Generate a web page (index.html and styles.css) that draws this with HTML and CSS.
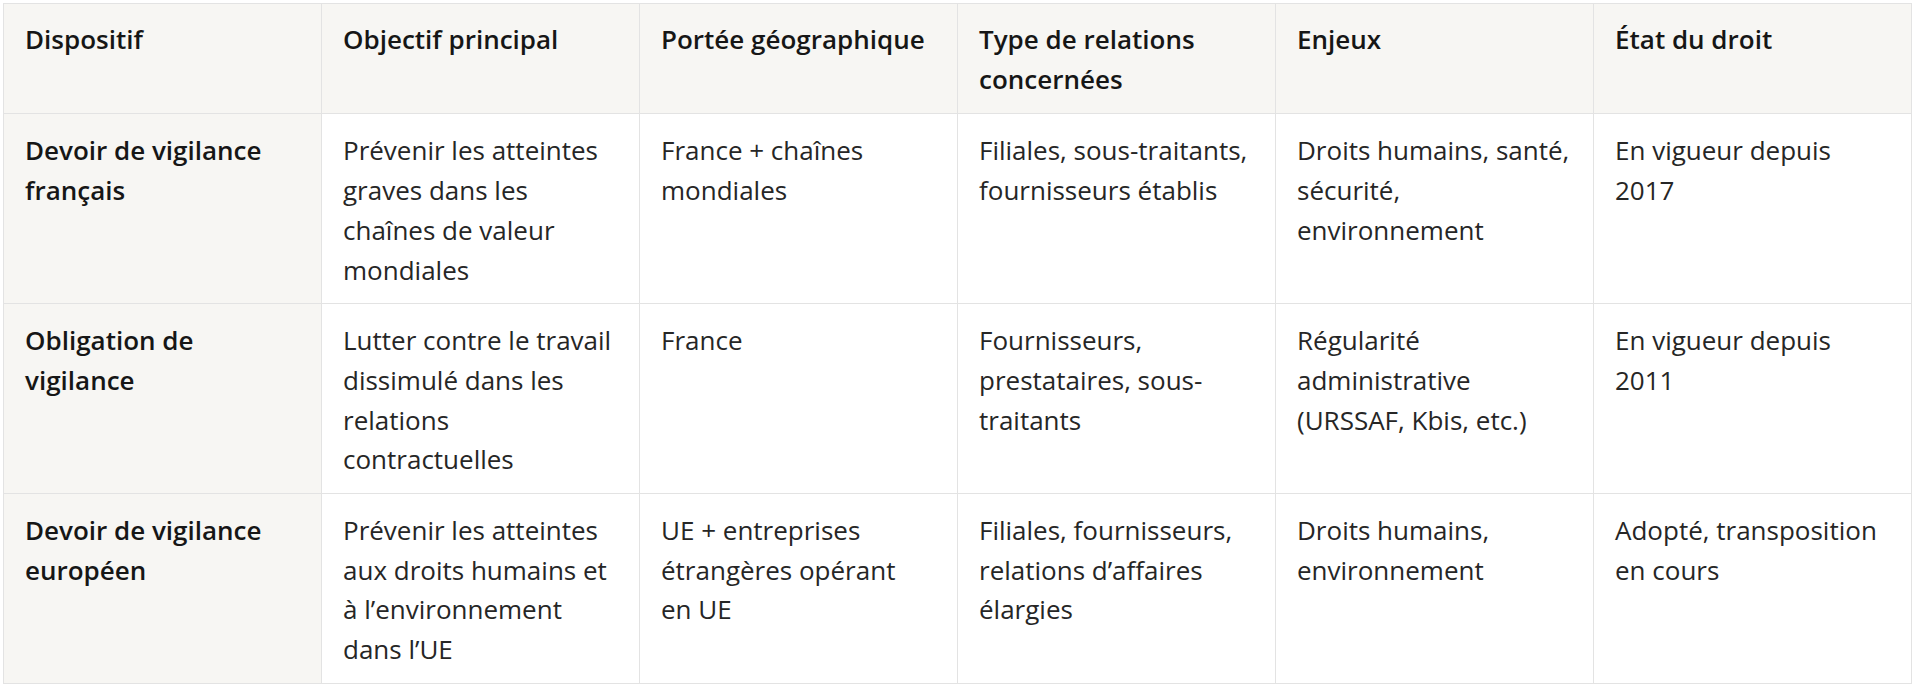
FILE: index.html
```html
<!DOCTYPE html>
<html lang="fr">
<head>
<meta charset="utf-8">
<title>Dispositifs de vigilance</title>
<link rel="stylesheet" href="styles.css">
</head>
<body>
<div class="wrap">
<table class="grid">
  <colgroup>
    <col class="c"><col class="c"><col class="c"><col class="c"><col class="c"><col class="c">
  </colgroup>
  <thead>
    <tr>
      <th>Dispositif</th>
      <th>Objectif principal</th>
      <th>Portée géographique</th>
      <th>Type de relations concernées</th>
      <th>Enjeux</th>
      <th>État du droit</th>
    </tr>
  </thead>
  <tbody>
    <tr>
      <td class="first">Devoir de vigilance français</td>
      <td>Prévenir les atteintes graves dans les chaînes de valeur mondiales</td>
      <td>France + chaînes mondiales</td>
      <td>Filiales, sous-traitants, fournisseurs établis</td>
      <td>Droits humains, santé, sécurité, environnement</td>
      <td>En vigueur depuis 2017</td>
    </tr>
    <tr>
      <td class="first">Obligation de vigilance</td>
      <td>Lutter contre le travail dissimulé dans les relations contractuelles</td>
      <td>France</td>
      <td>Fournisseurs, prestataires, sous-traitants</td>
      <td>Régularité administrative (URSSAF, Kbis, etc.)</td>
      <td>En vigueur depuis 2011</td>
    </tr>
    <tr>
      <td class="first">Devoir de vigilance européen</td>
      <td>Prévenir les atteintes aux droits humains et à l’environnement dans l’UE</td>
      <td>UE + entreprises étrangères opérant en&nbsp;UE</td>
      <td>Filiales, fournisseurs, relations d’affaires élargies</td>
      <td>Droits humains, environnement</td>
      <td>Adopté, transposition en cours</td>
    </tr>
  </tbody>
</table>
</div>
</body>
</html>
```
FILE: styles.css
```css
html, body {
  margin: 0;
  padding: 0;
  background: #ffffff;
}
.wrap {
  padding: 3px 0 0 3px;
}
.grid {
  width: 1908px;
  table-layout: fixed;
  border-collapse: collapse;
  font-family: "Open Sans", "Noto Sans", sans-serif;
  font-size: 26px;
  line-height: 39.7px;
  color: #1c1c1c;
}
.grid .c {
  width: 318px;
}
.grid th,
.grid td {
  border: 1px solid #e3e3e3;
  padding: 17px 22px 13px 21px;
  text-align: left;
  vertical-align: top;
}
.grid th {
  background: #f7f6f3;
  font-weight: 600;
  color: #161616;
  padding-top: 16px;
  padding-bottom: 14px;
}
.grid td {
  font-weight: 400;
  background: #ffffff;
  color: #262626;
}
.grid td.first {
  background: #f7f6f3;
  font-weight: 600;
  color: #161616;
}
```
